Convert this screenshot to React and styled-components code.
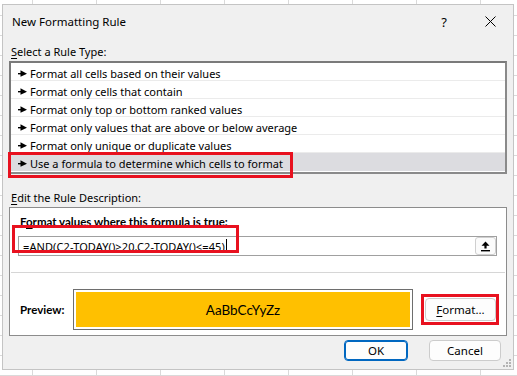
import styled, { createGlobalStyle } from 'styled-components'

const GlobalStyle = createGlobalStyle`
  html, body {
    margin: 0;
    height: 100%;
  }
  body {
    overflow: hidden;
    background-color: #fff;
    background-image:
      linear-gradient(to right, #dadada 1px, transparent 1px),
      linear-gradient(to bottom, #dadada 1px, transparent 1px);
    background-size: 64px 20px;
    background-position: 32px 15px;
    font-family: 'Noto Sans', 'Liberation Sans', sans-serif;
    font-size: 11px;
    color: #000;
  }
`

const rules = [
  'Format all cells based on their values',
  'Format only cells that contain',
  'Format only top or bottom ranked values',
  'Format only values that are above or below average',
  'Format only unique or duplicate values',
  'Use a formula to determine which cells to format',
]

const Arrow = () => (
  <svg width="9" height="7" viewBox="0 0 9 7">
    <rect x="0" y="3" width="4" height="1.4" fill="#000" />
    <path d="M2.5 0.3 L9 3.7 L2.5 6.8 Z" fill="#000" />
  </svg>
)

const UpIcon = () => (
  <svg width="9" height="11" viewBox="0 0 9 11">
    <path d="M4.5 0.5 L8.5 4.8 L5.6 4.8 L5.6 7.6 L3.4 7.6 L3.4 4.8 L0.5 4.8 Z" fill="#000" />
    <rect x="0" y="9" width="9" height="1.4" fill="#000" />
  </svg>
)

const CloseIcon = () => (
  <svg width="11" height="11" viewBox="0 0 11 11">
    <path d="M0.5 0.5 L10.5 10.5 M10.5 0.5 L0.5 10.5" stroke="#000" strokeWidth="1" />
  </svg>
)

const Grip = () => (
  <svg width="8" height="8" viewBox="0 0 8 8">
    {[[6, 0], [3, 3], [6, 3], [0, 6], [3, 6], [6, 6]].map(([x, y]) => (
      <rect key={`${x}-${y}`} x={x} y={y} width="2" height="2" fill="#b4b4b4" />
    ))}
  </svg>
)

const App = () => {
  return (
    <>
      <GlobalStyle />
      <Dialog>
        <TitleBar>
          <Title>New Formatting Rule</Title>
          <TitleButton>?</TitleButton>
          <TitleButton>
            <CloseIcon />
          </TitleButton>
        </TitleBar>
        <Body>
          <Label>
            <u>S</u>elect a Rule Type:
          </Label>
          <RuleList>
            {rules.map((rule, i) => {
              const selected = i === rules.length - 1
              const row = (
                <RuleRow key={rule} $selected={selected}>
                  <Arrow />
                  <span>{rule}</span>
                </RuleRow>
              )
              return selected ? (
                <Marked key={rule} $l={-3} $t={-1} $w={285} $h={26}>
                  {row}
                </Marked>
              ) : (
                row
              )
            })}
          </RuleList>

          <Label $gap={15}>
            <u>E</u>dit the Rule Description:
          </Label>
          <DescBox>
            <Heading>
              F<u>o</u>rmat values where this formula is true:
            </Heading>
            <Marked $l={-6} $t={-5} $w={227} $h={28}>
              <FormulaInput>
                <FormulaText>
                  =AND(C2-TODAY()&gt;20,C2-TODAY()&lt;=45)
                  <Caret />
                </FormulaText>
                <CollapseButton>
                  <UpIcon />
                </CollapseButton>
              </FormulaInput>
            </Marked>
            <Separator />
            <PreviewRow>
              <Heading as="span">Preview:</Heading>
              <PreviewFrame>
                <PreviewFill>AaBbCcYyZz</PreviewFill>
              </PreviewFrame>
              <Marked $l={-4} $t={-4} $w={78} $h={31}>
                <Button $w={71} $h={23}>
                  <u>F</u>ormat...
                </Button>
              </Marked>
            </PreviewRow>
          </DescBox>

          <Footer>
            <Button $w={64} $h={21} $primary>
              OK
            </Button>
            <Button $w={72} $h={21}>
              Cancel
            </Button>
          </Footer>
        </Body>
        <GripCorner>
          <Grip />
        </GripCorner>
      </Dialog>
    </>
  )
}

export default App

const Dialog = styled.div`
  position: relative;
  box-sizing: border-box;
  width: 512px;
  height: 366px;
  margin: 4px 0 0 2px;
  border: 1px solid #c4c4c4;
  background: #f0f0f0;
  display: flex;
  flex-direction: column;
`

const TitleBar = styled.div`
  height: 33px;
  display: flex;
  align-items: center;
  padding-left: 9px;
`

const Title = styled.div`
  flex: 1;
  font-size: 11.5px;
`

const TitleButton = styled.div`
  width: 46px;
  height: 33px;
  display: flex;
  align-items: center;
  justify-content: center;
  font-size: 13px;
`

const Body = styled.div`
  padding: 0 6px;
  display: flex;
  flex-direction: column;
`

const Label = styled.div`
  margin: ${(p) => p.$gap || 5}px 0 1px 2px;
  line-height: 17px;

  u {
    text-underline-offset: 2px;
  }
`

const RuleList = styled.div`
  box-sizing: border-box;
  height: 113px;
  border: 2px solid #7a7a7a;
  border-right-color: #8a8a8a;
  border-bottom-color: #8a8a8a;
  background: #fff;
  display: flex;
  flex-direction: column;
`

const RuleRow = styled.div`
  box-sizing: border-box;
  height: 18px;
  display: flex;
  align-items: center;
  gap: 3px;
  padding: 3px 0 0 7px;
  background: ${(p) => (p.$selected ? '#dcdce0' : 'transparent')};
  border-bottom: 1px solid ${(p) => (p.$selected ? 'transparent' : '#ebebeb')};

  svg {
    flex: none;
  }
`

const Marked = styled.div`
  position: relative;

  &::after {
    content: '';
    position: absolute;
    left: ${(p) => p.$l}px;
    top: ${(p) => p.$t}px;
    width: ${(p) => p.$w}px;
    height: ${(p) => p.$h}px;
    box-sizing: border-box;
    border: 3px solid #e8111f;
    pointer-events: none;
    z-index: 2;
  }
`

const DescBox = styled.div`
  box-sizing: border-box;
  height: 129px;
  border: 1px solid #8c8c8c;
  background: #fff;
  padding: 6px 9px 0 8px;
  display: flex;
  flex-direction: column;
`

const Heading = styled.div`
  margin-left: 2px;
  font-family: Lato, 'Noto Sans', sans-serif;
  font-size: 11.5px;
  font-weight: 700;
  line-height: 16px;

  u {
    text-underline-offset: 2px;
  }
`

const FormulaInput = styled.div`
  box-sizing: border-box;
  margin-top: 6px;
  height: 20px;
  border: 1px solid #a0a0a0;
  display: flex;
  align-items: center;
  justify-content: space-between;
  padding: 0 0 0 4px;
`

const FormulaText = styled.div`
  display: flex;
  align-items: center;
  letter-spacing: 0.1px;
`

const Caret = styled.span`
  display: inline-block;
  width: 1px;
  height: 14px;
  margin-left: 1px;
  background: #000;
`

const CollapseButton = styled.div`
  box-sizing: border-box;
  width: 21px;
  height: 18px;
  border: 1px solid #cfcfcf;
  border-radius: 3px;
  background: #fbfbfb;
  display: flex;
  align-items: center;
  justify-content: center;
`

const Separator = styled.div`
  height: 1px;
  margin: 16px -8px 0 -7px;
  background: #d6d6d6;
`

const PreviewRow = styled.div`
  margin-top: 16px;
  display: flex;
  align-items: center;

  > span {
    width: 53px;
  }
`

const PreviewFrame = styled.div`
  box-sizing: border-box;
  width: 340px;
  height: 41px;
  padding: 2px;
  border: 1px solid #6e6e6e;
  margin-right: 12px;
`

const PreviewFill = styled.div`
  height: 100%;
  background: #ffc000;
  display: flex;
  align-items: center;
  justify-content: center;
  font-family: Lato, 'Noto Sans', sans-serif;
  font-size: 13.5px;
`

const Button = styled.div`
  box-sizing: border-box;
  width: ${(p) => p.$w}px;
  height: ${(p) => p.$h}px;
  border: 1px solid ${(p) => (p.$primary ? '#0067c0' : '#cccccc')};
  box-shadow: ${(p) => (p.$primary ? 'inset 0 0 0 1px #0067c0' : 'none')};
  border-radius: 4px;
  background: #fdfdfd;
  display: flex;
  align-items: center;
  justify-content: center;
  font-size: 11.5px;

  u {
    text-underline-offset: 2px;
  }
`

const Footer = styled.div`
  margin: 4px 6px 0 0;
  display: flex;
  justify-content: flex-end;
  gap: 21px;
`

const GripCorner = styled.div`
  position: absolute;
  right: 2px;
  bottom: 2px;
  line-height: 0;
`
